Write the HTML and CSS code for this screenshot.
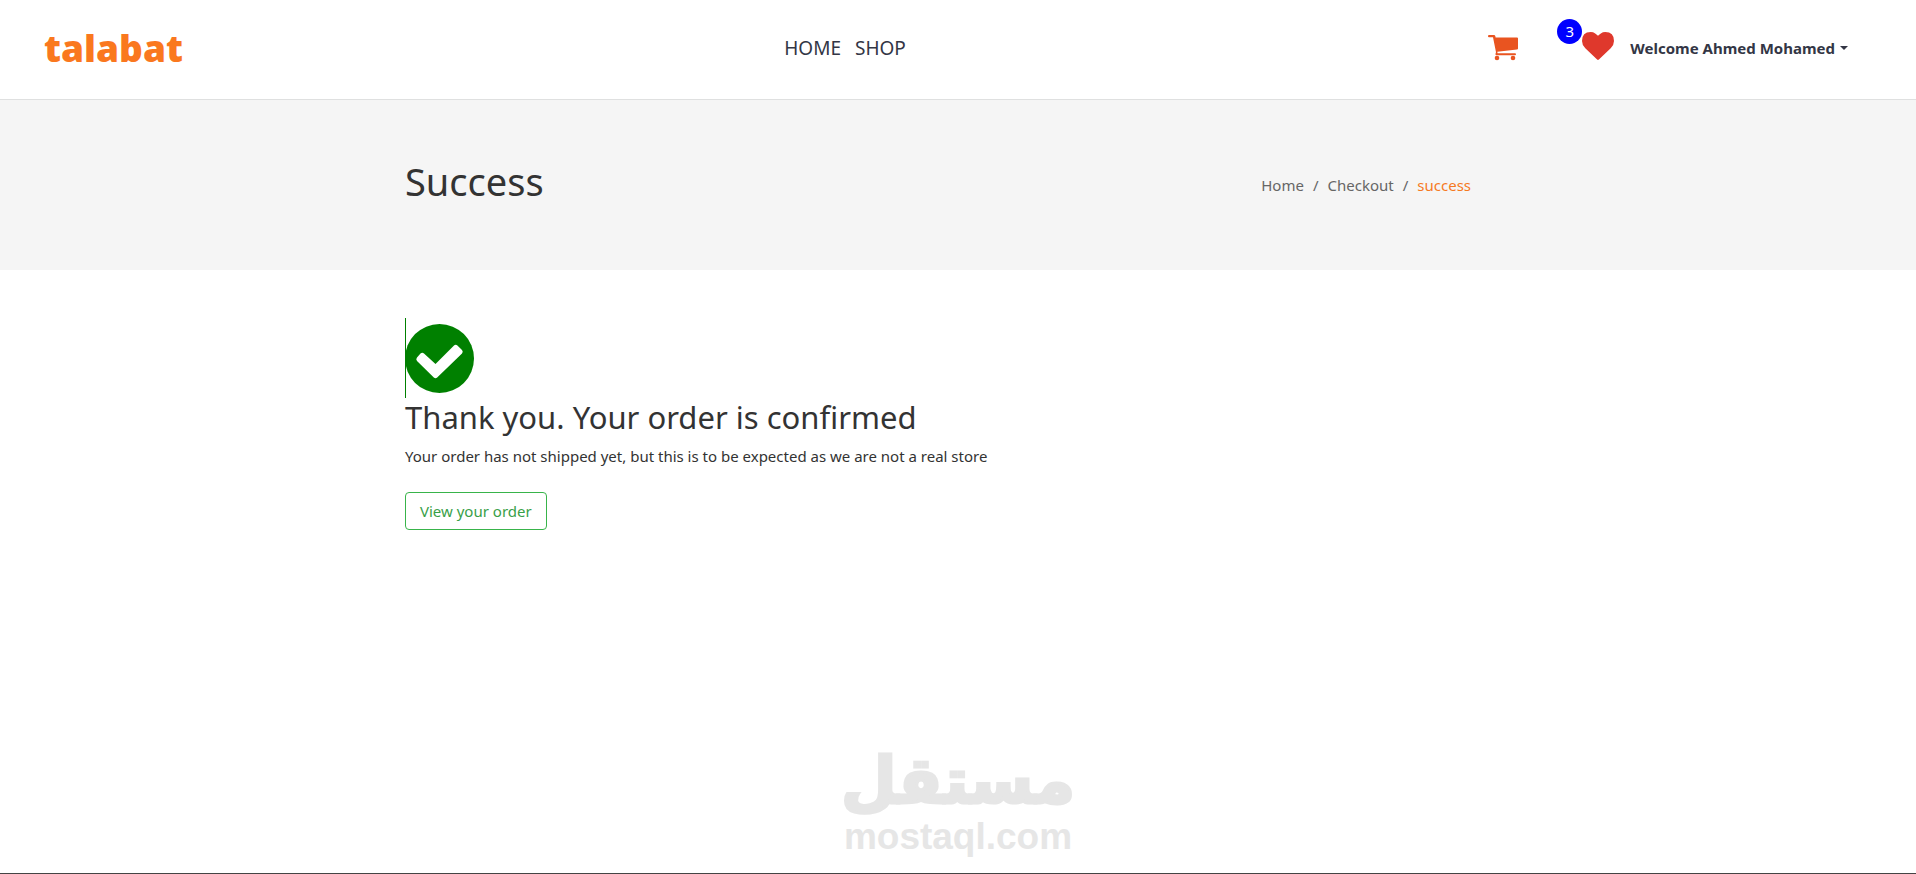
FILE: index.html
```html
<!DOCTYPE html>
<html lang="en">
<head>
    <meta charset="UTF-8">
    <meta name="viewport" content="width=device-width, initial-scale=1.0">
    <title>Talabat | Success</title>
    <link rel="stylesheet" href="styles.css">
</head>
<body>
    <header class="header">
        <a href="#" class="logo">talabat</a>
        <nav class="menu">
            <a href="#">HOME</a>
            <a href="#">SHOP</a>
        </nav>
        <div class="user-menu">
            <a href="#" class="cart" aria-label="Cart">
                <svg width="30" height="26" viewBox="0 0 30 26">
                    <path fill="#e95420" d="M1 0h5q1 0 1.300 1l.3 1.400H29q1 0 1 1v10q0 1-1 1.200L9.300 16.800l.3 1.400H27q1 0 1 1t-1 1.100H8.500q-1.300 0-1-1.500l.5-1.500L5 2.300H1Q0 2.300 0 1.200T1 0z"/>
                    <circle cx="9" cy="23" r="2.300" fill="#e95420"/>
                    <circle cx="25" cy="23" r="2.300" fill="#e95420"/>
                </svg>
            </a>
            <a href="#" class="wishlist" aria-label="Wishlist">
                <span class="badge">3</span>
                <svg width="32" height="28" viewBox="0 0 32 28">
                    <path fill="#df382c" d="M16 28q-.5 0-.9-.4L3.300 16.300Q0 13 0 9 0 0 8.700 0q2.500 0 4.500 1.400Q15 2.600 16 3.800q1-1.200 2.800-2.400Q20.800 0 23.300 0 32 0 32 9q0 4-3.300 7.300L16.900 27.600q-.4.4-.9.4z"/>
                </svg>
            </a>
            <button type="button" class="account">Welcome Ahmed Mohamed</button>
        </div>
    </header>

    <section class="banner">
        <div class="container banner-row">
            <h1>Success</h1>
            <ol class="breadcrumb">
                <li><a href="#">Home</a></li>
                <li><a href="#">Checkout</a></li>
                <li class="active">success</li>
            </ol>
        </div>
    </section>

    <main class="container confirm">
        <div class="check">
            <svg width="69" height="69" viewBox="0 0 69 69">
                <circle cx="34.500" cy="34.500" r="34.500" fill="#008000"/>
                <path d="M12 33.500L15.500 29.500q1.800-1.500 3.500 0L30.500 40 49 21.500q1.700-1.500 3.400 0l4.600 4.500q1.500 1.700 0 3.400L32.200 53.500q-1.700 1.500-3.400 0L12 37q-1.500-1.700 0-3.500z" fill="#fff"/>
            </svg>
        </div>
        <h2>Thank you. Your order is confirmed</h2>
        <p>Your order has not shipped yet, but this is to be expected as we are not a real store</p>
        <a href="#" class="btn">View your order</a>
    </main>

    <footer class="watermark">
        <span class="mark-ar" lang="ar">مستقل</span>
        <span class="mark-en">mostaql.com</span>
    </footer>
</body>
</html>
```

FILE: styles.css
```css
* {
    box-sizing: border-box;
}
body {
    margin: 0;
    min-height: 100vh;
    display: flex;
    flex-direction: column;
    font-family: "Noto Sans", sans-serif;
    font-size: 15px;
    line-height: 24px;
    color: #333;
    background: #fff;
    border-bottom: 1px solid #444;
}
a {
    color: inherit;
    text-decoration: none;
}
h1, h2, p {
    margin: 0;
    font-weight: 400;
}

/* header */
.header {
    display: grid;
    grid-template-columns: 44fr auto 56fr;
    align-items: center;
    height: 100px;
    padding: 0 68px 4px 44px;
    border-bottom: 1px solid #dfe0e0;
    box-shadow: 0 1px 3px rgba(0, 0, 0, 0.06);
}
.logo {
    font-family: "Open Sans", sans-serif;
    font-size: 37px;
    font-weight: 800;
    line-height: 48px;
    color: #fa781e;
}
.menu {
    display: flex;
    gap: 14px;
    font-size: 19px;
    color: #333645;
}
.user-menu {
    display: flex;
    align-items: center;
    justify-content: flex-end;
}
.cart, .wishlist {
    display: flex;
}
.wishlist {
    position: relative;
    margin: 0 16px 4px 64px;
}
.badge {
    position: absolute;
    right: 32px;
    bottom: 16px;
    width: 25px;
    height: 25px;
    border-radius: 50%;
    background: #00f;
    color: #fff;
    text-align: center;
}
.account {
    display: flex;
    align-items: center;
    gap: 5px;
    padding: 0;
    border: 0;
    background: none;
    font: inherit;
    font-weight: 700;
    color: #333645;
}
.account::after {
    content: "";
    border: 4px solid transparent;
    border-top-color: #333645;
    border-bottom: 0;
}

/* page title */
.container {
    width: 100%;
    max-width: 1106px;
    margin: 0 auto;
}
.banner {
    padding: 56px 0 64px;
    background: #f5f5f5;
}
.banner-row {
    display: flex;
    align-items: center;
    justify-content: space-between;
}
h1 {
    font-size: 38px;
    line-height: 50px;
}
.breadcrumb {
    display: flex;
    margin: 0;
    padding: 8px 40px 0 0;
    list-style: none;
    color: #666;
}
.breadcrumb li + li::before {
    content: "/";
    padding: 0 9px;
    color: #666;
}
.breadcrumb .active {
    color: #f57a1f;
}

/* confirmation */
.confirm {
    flex: 1;
    padding-top: 48px;
}
.check {
    display: flex;
    align-items: center;
    height: 80px;
    border-left: 1px solid #008000;
}
.check svg {
    margin-left: -1px;
}
h2 {
    font-size: 31px;
    line-height: 38px;
}
p {
    margin: 8px 0 24px;
}
.btn {
    display: inline-block;
    padding: 6px 14px;
    border: 1px solid #38b44a;
    border-radius: 4px;
    color: #38a048;
}

/* watermark */
.watermark {
    display: flex;
    flex-direction: column;
    align-items: center;
    padding-bottom: 16px;
    color: #e6e6e6;
}
.mark-ar {
    font-family: "DejaVu Sans", sans-serif;
    font-size: 64px;
    font-weight: 700;
    line-height: 72px;
    -webkit-text-stroke: 3px #e6e6e6;
}
.mark-en {
    font-family: "Liberation Sans", sans-serif;
    font-size: 37px;
    font-weight: 700;
    line-height: 40px;
}
```
